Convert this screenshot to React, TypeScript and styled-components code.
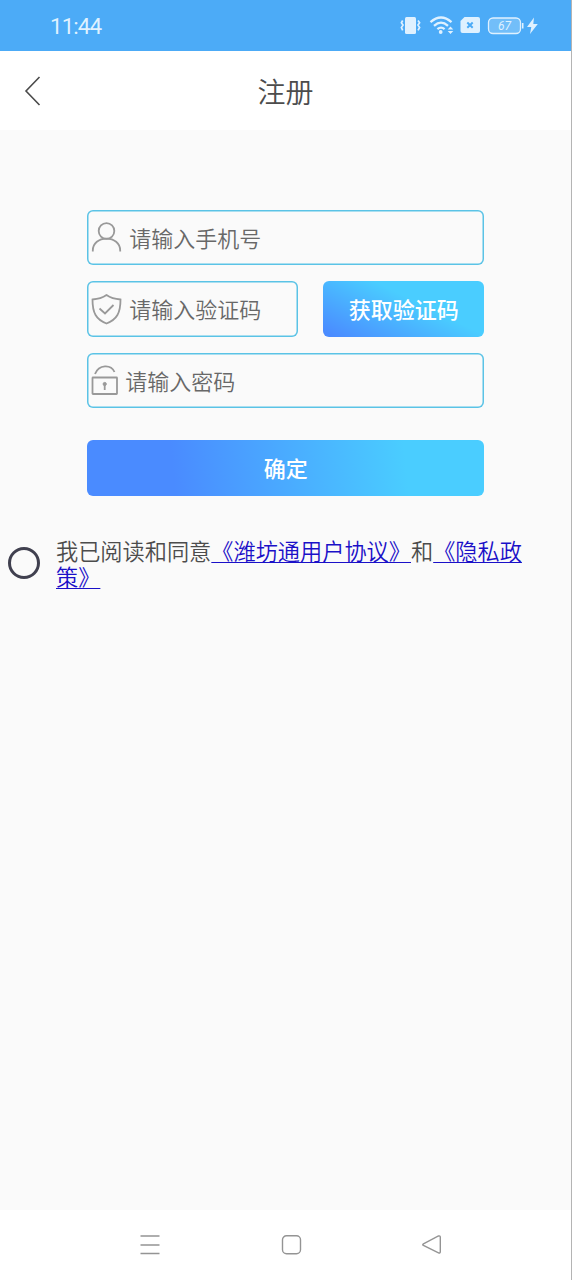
import React from 'react';
import styled, { createGlobalStyle } from 'styled-components';

const GlobalStyle = createGlobalStyle`
  *, *::before, *::after { box-sizing: border-box; }
  body { margin: 0; background: #fafafa; }
`;

const Screen = styled.div`
  display: flex;
  flex-direction: column;
  width: 572px;
  height: 1280px;
  background: #fafafa;
  color: #4c4c4c;
  border-right: 1px solid #b4b4b4;
  font-family: 'Noto Sans CJK SC', sans-serif;
  font-weight: 350;
  overflow: hidden;
`;

const StatusBar = styled.header`
  display: flex;
  align-items: center;
  justify-content: space-between;
  height: 51px;
  flex: none;
  padding: 0 31px 0 50px;
  background: #4cabf7;
  color: #dff1ff;
`;

const Clock = styled.span`
  font-family: Roboto, sans-serif;
  font-size: 22.5px;
  font-weight: 400;
  letter-spacing: -1px;
  line-height: 50px;
`;

const StatusIcons = styled.svg`
  display: block;
  width: 140px;
  height: 51px;
`;

const BatteryLevel = styled.text`
  font: italic 400 12px Roboto, sans-serif;
`;

const TitleBar = styled.div`
  display: grid;
  grid-template-columns: 64px 1fr 64px;
  align-items: center;
  flex: none;
  height: 79px;
  background: #fff;
`;

const BackButton = styled.button`
  display: flex;
  padding: 0 0 0 24px;
  border: 0;
  background: none;
`;

const Title = styled.h1`
  margin: 0;
  font-size: 28px;
  line-height: 40px;
  font-weight: 350;
  text-align: center;
`;

const Content = styled.main`
  flex: 1;
  padding-top: 79.6px;
`;

const Form = styled.form`
  display: flex;
  flex-direction: column;
  gap: 16px;
  width: 397px;
  margin-left: 87.3px;
`;

const CodeRow = styled.div`
  display: flex;
  justify-content: space-between;
`;

const Field = styled.label<{ $width?: number; $gap?: number }>`
  display: flex;
  align-items: center;
  gap: ${({ $gap = 7 }) => $gap}px;
  width: ${({ $width = 397 }) => $width}px;
  height: 55.5px;
  padding-left: 4px;
  border-radius: 6px;
  box-shadow: inset 0 0 0 1.5px #5bc3e6;
`;

const FieldIcon = styled.svg<{ $width?: number }>`
  flex: none;
  width: ${({ $width = 31 }) => $width}px;
  height: 32px;
  fill: none;
  stroke: #999;
  stroke-width: 1.8;
`;

const Input = styled.input`
  flex: 1;
  min-width: 0;
  height: 36px;
  margin-bottom: 1px;
  padding: 0;
  border: 0;
  outline: 0;
  background: transparent;
  font: 350 22px 'Noto Sans CJK SC', sans-serif;
  color: #666;
  &::placeholder { color: #686868; opacity: 1; }
`;

const GradientButton = styled.button<{ $width: number; $fill: string }>`
  width: ${({ $width }) => $width}px;
  height: 55.5px;
  padding: 0 0 1px;
  border: 0;
  border-radius: 6px;
  background: ${({ $fill }) => $fill};
  color: #fff;
  font: 500 22px 'Noto Sans CJK SC', sans-serif;
`;

const SubmitRow = styled.div`
  padding-top: 16px;
`;

const Agreement = styled.div`
  display: flex;
  align-items: center;
  gap: 16px;
  margin-top: 41px;
  padding-left: 8px;
`;

const Radio = styled.span`
  flex: none;
  width: 32px;
  height: 32px;
  border: 3px solid #40404f;
  border-radius: 50%;
`;

const AgreementText = styled.p`
  width: 480px;
  margin: 0;
  font-size: 22.2px;
  line-height: 26.5px;
`;

const Link = styled.a`
  color: #1a10c8;
  text-decoration: underline;
  text-decoration-thickness: 1.4px;
  text-underline-offset: 2px;
  text-decoration-skip-ink: none;
`;

const NavBar = styled.nav`
  display: flex;
  align-items: center;
  flex: none;
  height: 70px;
  padding-left: 139px;
  gap: 119px;
  background: #fff;
`;

const NavIcon = styled.svg`
  width: 22px;
  height: 22px;
  fill: none;
  stroke: #949494;
  stroke-width: 1.4;
`;

export default function App() {
  return (
    <>
      <GlobalStyle />
      <Screen>
        <StatusBar>
          <Clock>11:44</Clock>
          <StatusIcons viewBox="400 0 140 51" fill="currentColor">
            <rect x="405" y="17" width="11" height="17" rx="1.5" />
            <path d="M402.7 20.5l-1.3 2.3 1.6 2.3-1.6 2.4 1.3 2.8M418 20.5l1.6 2.3-1.6 2.3 1.6 2.4-1.6 2.8" fill="none" stroke="currentColor" strokeWidth="1.7" />
            <g fill="none" stroke="currentColor" strokeWidth="2.3">
              <path d="M430.5 22.2Q441 12.8 451.5 22.2" />
              <path d="M434 25.8Q441 19.5 448 25.8" />
              <path d="M437.4 29.2Q441 26.1 444.6 29.2" />
            </g>
            <circle cx="440.7" cy="32" r="1.9" />
            <path d="M450.5 26.5l2.8 3h-5.6zM450.5 34l2.8-3h-5.6z" />
            <path d="M464.5 17H478a2 2 0 012 2v12a2 2 0 01-2 2h-15.500a2 2 0 01-2-2V21z" />
            <path d="M467.300 22.500l5.400 5.300m0-5.300l-5.400 5.300" stroke="#4cabf7" strokeWidth="2" />
            <rect x="488.500" y="18" width="32" height="15.500" rx="4.500" fill="#72bef9" stroke="currentColor" strokeWidth="1.300" />
            <path d="M522.700 23v5.500" stroke="currentColor" strokeWidth="1.600" />
            <BatteryLevel x="498" y="30">67</BatteryLevel>
            <path d="M534 17.500l-7 9.500h4.300l-1.300 7 7.800-10h-4.500z" />
          </StatusIcons>
        </StatusBar>
        <TitleBar>
          <BackButton type="button" aria-label="返回">
            <svg width="18" height="30" viewBox="0 0 18 30" fill="none" stroke="#4a4a4a" strokeWidth="1.600">
              <path d="M15.500 1L2 15l13.500 14" />
            </svg>
          </BackButton>
          <Title>注册</Title>
        </TitleBar>
        <Content>
          <Form>
            <Field>
              <FieldIcon viewBox="0 0 31 32">
                <circle cx="15.500" cy="10" r="7.800" />
                <path d="M1.800 30.500v-1C1.800 22 8 17.600 15.500 17.600S29.200 22 29.200 29.500v1" />
              </FieldIcon>
              <Input placeholder="请输入手机号" />
            </Field>
            <CodeRow>
              <Field $width={211}>
                <FieldIcon viewBox="0 0 31 32">
                  <path d="M15.500 2Q21 5.800 29.500 6.500C29.500 20 26 26.500 15.500 30.500 5 26.500 1.500 20 1.500 6.500Q10 5.800 15.500 2z" />
                  <path d="M8.500 15.500l5.500 5 8.500-8.500" />
                </FieldIcon>
                <Input placeholder="请输入验证码" />
              </Field>
              <GradientButton type="button" $width={161} $fill="linear-gradient(26deg, #4a8bff 4%, #4acdff 60%)">
                获取验证码
              </GradientButton>
            </CodeRow>
            <Field $gap={7}>
              <FieldIcon $width={27} viewBox="0 0 27 32">
                <rect x="1.500" y="13.500" width="24.500" height="16.500" rx="0.500" />
                <path d="M4 10C8 .3 20 .3 23.500 8" />
                <circle cx="13.700" cy="20" r="1.600" fill="#999" strokeWidth="1" />
                <path d="M13.700 20.500v5.500" />
              </FieldIcon>
              <Input placeholder="请输入密码" />
            </Field>
            <SubmitRow>
              <GradientButton type="button" $width={397} $fill="linear-gradient(84deg, #4a8bff 22%, #4acdff 80%)">
                确定
              </GradientButton>
            </SubmitRow>
          </Form>
          <Agreement>
            <Radio role="radio" aria-checked="false" />
            <AgreementText>
              我已阅读和同意<Link>《潍坊通用户协议》</Link>和<Link>《隐私政策》</Link>
            </AgreementText>
          </Agreement>
        </Content>
        <NavBar>
          <NavIcon viewBox="0 0 22 22">
            <path d="M1.500 2h19M1.500 11h19M1.500 19.500h19" />
          </NavIcon>
          <NavIcon viewBox="0 0 22 22">
            <rect x="2.500" y="1.800" width="18" height="18" rx="4" />
          </NavIcon>
          <NavIcon viewBox="0 0 22 22">
            <path d="M2.400 9.800L17.500 2q1.800-.5 1.800 1.200v14.600q0 1.800-1.800 1L2.400 11.500q-1.300-.8 0-1.700z" />
          </NavIcon>
        </NavBar>
      </Screen>
    </>
  );
}
